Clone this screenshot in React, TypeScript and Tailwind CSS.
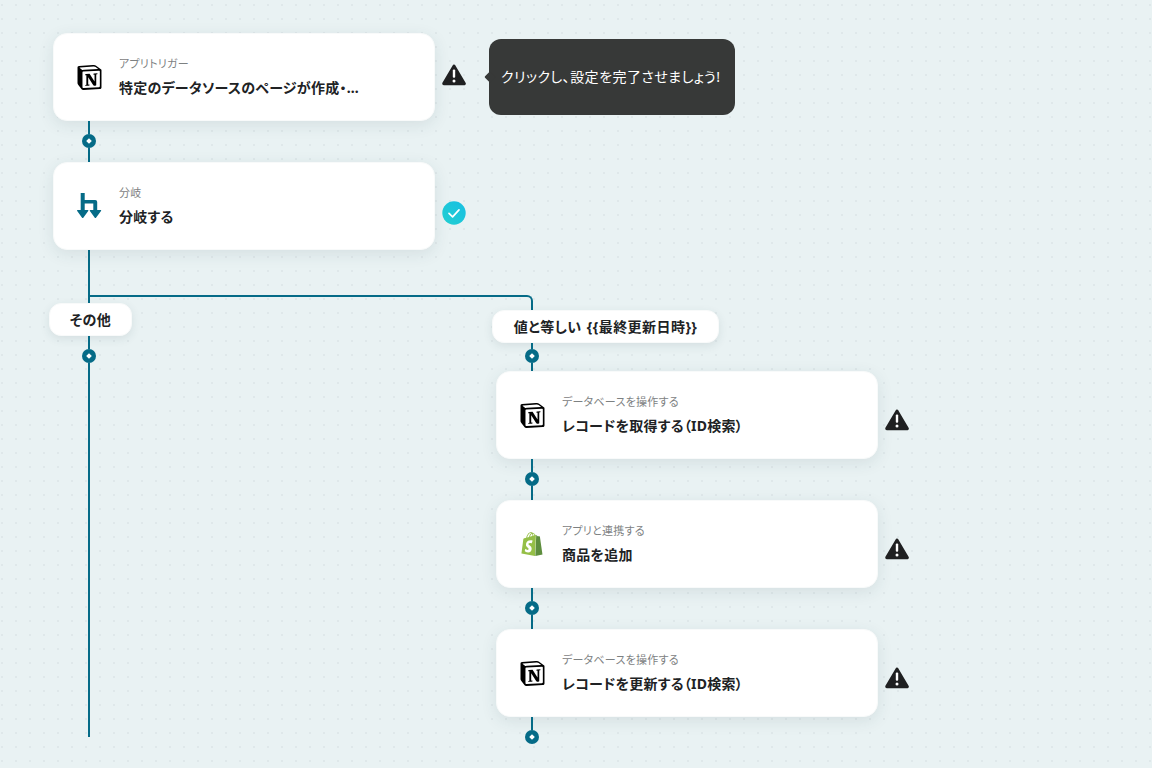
import { SiNotion } from "react-icons/si";

const LINE = "bg-[#056b87]";

function Dot() {
  return (
    <div className="w-[14px] h-[14px] shrink-0 rounded-full bg-[#056b87] flex items-center justify-center">
      <div className="w-[4px] h-[4px] bg-white rotate-45" />
    </div>
  );
}

function Connector({ top, bottom }: { top: number; bottom: number }) {
  return (
    <div className="w-[14px] flex flex-col items-center">
      <div className={`w-[2px] ${LINE}`} style={{ height: top }} />
      <Dot />
      <div className={`w-[2px] ${LINE}`} style={{ height: bottom }} />
    </div>
  );
}

function Warning() {
  return (
    <svg width="24" height="22" viewBox="0 0 24 22" className="shrink-0">
      <path d="M12 2.2 L22.2 19.6 H1.8 Z" fill="#1f2021" stroke="#1f2021" strokeWidth="3.2" strokeLinejoin="round" />
      <rect x="10.8" y="5.6" width="2.4" height="8.2" rx="1" fill="#fff" />
      <circle cx="12" cy="16.9" r="1.5" fill="#fff" />
    </svg>
  );
}

function Check() {
  return (
    <svg width="24" height="24" viewBox="0 0 24 24" className="shrink-0">
      <defs>
        <linearGradient id="chk" x1="0" y1="1" x2="1" y2="0">
          <stop offset="0" stopColor="#22cfd0" />
          <stop offset="1" stopColor="#18bfe3" />
        </linearGradient>
      </defs>
      <circle cx="12" cy="12" r="11.7" fill="url(#chk)" />
      <path d="M7 12.4 L10.6 15.8 L17 8.9" fill="none" stroke="#fff" strokeWidth="1.7" strokeLinecap="round" strokeLinejoin="round" />
    </svg>
  );
}

function BranchIcon() {
  return (
    <svg width="26" height="26" viewBox="0 0 26 26" className="shrink-0">
      <path
        d="M4.7 0 H8.7 V7 H19.2 Q21.2 7 21.2 9 V17 H24.6 Q25.8 17 25 18 L20.2 24.6 Q19.4 25.6 18.6 24.6 L13.9 18 Q13.2 17 14.4 17 H17.3 V10.6 H8.7 V17 H11.8 Q13 17 12.2 18 L7.5 24.6 Q6.7 25.6 5.9 24.6 L1.2 18 Q0.5 17 1.7 17 H4.7 Z"
        fill="#056b87"
      />
    </svg>
  );
}

function ShopifyIcon() {
  return (
    <svg width="24" height="24" viewBox="0 0 24 24" className="shrink-0">
      <path
        fill="#95bf47"
        d="M11.71 11.305s-.81-.424-1.774-.424c-1.447 0-1.504.906-1.504 1.141 0 1.232 3.24 1.715 3.24 4.629 0 2.295-1.44 3.76-3.406 3.76-2.354 0-3.54-1.465-3.54-1.465l.646-2.086s1.245 1.066 2.28 1.066c.675 0 .975-.545.975-.932 0-1.619-2.654-1.694-2.654-4.359-.034-2.237 1.571-4.416 4.827-4.416 1.257 0 1.875.361 1.875.361l-.945 2.715-.02.01zM11.17.83c.136 0 .271.038.405.135-.984.465-2.064 1.639-2.508 3.992-.656.213-1.293.405-1.889.578C7.697 3.75 8.951.84 11.17.84V.83zm1.235 2.949v.135c-.754.232-1.583.484-2.394.736.466-1.777 1.333-2.645 2.085-2.971.193.501.309 1.176.309 2.1zm.539-2.234c.694.074 1.141.867 1.429 1.755-.349.114-.735.231-1.158.366v-.252c0-.752-.096-1.371-.271-1.871v.002zm2.992 1.289c-.02 0-.06.021-.078.021s-.289.075-.714.21c-.423-1.233-1.176-2.37-2.508-2.37h-.115C12.135.209 11.669 0 11.265 0 8.159 0 6.675 3.877 6.21 5.846c-1.194.365-2.063.636-2.16.674-.675.213-.694.232-.772.87-.075.462-1.83 14.063-1.83 14.063L15.009 24l.927-21.166z"
      />
      <path
        fill="#5e8e3e"
        d="M15.337 23.979l7.216-1.561s-2.604-17.613-2.625-17.73c-.018-.116-.114-.192-.211-.192s-1.929-.136-1.929-.136-1.275-1.274-1.439-1.411c-.045-.037-.075-.057-.121-.074l-.914 21.104h.023z"
      />
    </svg>
  );
}

function Card({ icon, small, title }: { icon: React.ReactNode; small: string; title: string }) {
  return (
    <div className="w-[382px] h-[88px] shrink-0 rounded-[14px] bg-white border border-[#f8fafa] shadow-[0_4px_16px_rgba(40,70,80,0.1)] flex items-center pl-[22px]">
      <div className="w-[26px] h-[26px] flex items-center justify-center">{icon}</div>
      <div className="ml-[17px] flex flex-col">
        <div className="text-[11px] tracking-[0.25px] leading-[16px] text-[#7d8182]">{small}</div>
        <div className="mt-[6px] text-[14px] tracking-[0.25px] leading-[20px] font-bold text-[#202224]">{title}</div>
      </div>
    </div>
  );
}

function Label({ text, className }: { text: string; className: string }) {
  return (
    <div className={`h-[33px] rounded-[12px] bg-white border border-[#f8fafa] shadow-[0_3px_10px_rgba(40,70,80,0.1)] flex items-center justify-center text-[14px] tracking-[0.45px] [word-spacing:1px] font-bold text-[#202224] ${className}`}>
      {text}
    </div>
  );
}

const notion = <SiNotion size={25} color="#000" />;

export default function App() {
  return (
    <div
      className="w-[1152px] h-[768px] overflow-hidden bg-[#e9f2f3] pt-[33px] pl-[53px] [font-family:'Noto_Sans','Noto_Sans_CJK_JP',sans-serif] [font-feature-settings:'palt'] bg-[radial-gradient(circle,#dfe8ea_1px,transparent_1.2px)] bg-[length:14px_14px] bg-[position:-5px_-2px]"
    >
      <div className="flex items-center">
        <Card icon={notion} small="アプリトリガー" title="特定のデータソースのページが作成・…" />
        <div className="ml-[7px] mb-[4px] flex"><Warning /></div>
        <div className="relative ml-[23px] w-[246px] h-[76px] rounded-[12px] bg-[#373938] flex items-center pl-[12px] pb-[2px] text-[14px] tracking-[0.45px] text-white">
          <div className="absolute left-[-3px] top-[34px] w-[8px] h-[8px] rotate-45 bg-[#373938] rounded-[1px]" />
          クリックし、設定を完了させましょう!
        </div>
      </div>
      <div className="ml-[29px]"><Connector top={13} bottom={14} /></div>
      <div className="flex items-center">
        <Card icon={<BranchIcon />} small="分岐" title="分岐する" />
        <div className="ml-[7px] mt-[14px] flex"><Check /></div>
      </div>
      <div className={`ml-[35px] w-[2px] h-[45px] ${LINE}`} />
      <div className="ml-[35px] w-[445px] h-[8px] border-t-2 border-l-2 border-r-2 border-[#056b87] rounded-tr-[6px]" />
      <div className="flex ml-[-4px]">
        <div className="w-[443px] flex flex-col">
          <Label text="その他" className="w-[83px]" />
          <div className="ml-[33px]">
            <Connector top={13} bottom={374} />
          </div>
        </div>
        <div className="flex flex-col">
          <div className={`ml-[39px] w-[2px] h-[7px] ${LINE}`} />
          <Label text="値と等しい {{最終更新日時}}" className="w-[227px]" />
          <div className="ml-[33px]"><Connector top={6} bottom={8} /></div>
          <div className="ml-[4px] flex items-center">
            <Card icon={notion} small="データベースを操作する" title="レコードを取得する（ID検索）" />
            <div className="ml-[7px] mt-[10px] flex"><Warning /></div>
          </div>
          <div className="ml-[33px]"><Connector top={13} bottom={14} /></div>
          <div className="ml-[4px] flex items-center">
            <Card icon={<ShopifyIcon />} small="アプリと連携する" title="商品を追加" />
            <div className="ml-[7px] mt-[10px] flex"><Warning /></div>
          </div>
          <div className="ml-[33px]"><Connector top={13} bottom={14} /></div>
          <div className="ml-[4px] flex items-center">
            <Card icon={notion} small="データベースを操作する" title="レコードを更新する（ID検索）" />
            <div className="ml-[7px] mt-[10px] flex"><Warning /></div>
          </div>
          <div className="ml-[33px]"><Connector top={13} bottom={0} /></div>
        </div>
      </div>
    </div>
  );
}
